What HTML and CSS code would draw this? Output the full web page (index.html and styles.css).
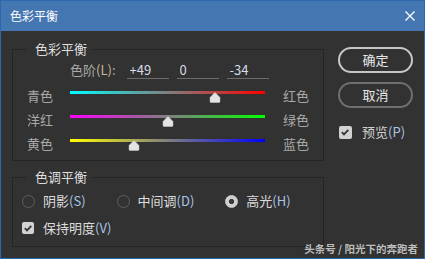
FILE: index.html
```html
<!DOCTYPE html>
<html lang="zh-CN">
<head>
  <meta charset="UTF-8">
  <meta name="viewport" content="width=device-width, initial-scale=1.0">
  <title>色彩平衡</title>
  <link rel="stylesheet" href="styles.css">
</head>
<body>

<div class="dialog">
  <div class="titlebar">
    <span class="title">色彩平衡</span>
    <svg class="close" viewBox="0 0 10 10" aria-hidden="true">
      <path d="M0.5 0.5 L9.5 9.5 M9.5 0.5 L0.5 9.5" />
    </svg>
  </div>

  <div class="content">
    <div class="main">

      <!-- Color balance group -->
      <div class="group group-color">
        <div class="group-title">色彩平衡</div>
        <div class="levels">
          <span class="levels-label">色阶<span class="key">(L)</span>:</span>
          <input class="level" type="text" value="+49">
          <input class="level" type="text" value="0">
          <input class="level" type="text" value="-34">
        </div>

        <div class="slider-row">
          <span class="side">青色</span>
          <div class="track cyan-red">
            <svg class="thumb" style="left: 74.5%;" viewBox="0 0 11 11"><path d="M5.5 0.3 L10.7 5.6 V9.3 Q10.7 10.7 9.3 10.7 H1.7 Q0.3 10.7 0.3 9.3 V5.6 Z" /></svg>
          </div>
          <span class="side">红色</span>
        </div>
        <div class="slider-row">
          <span class="side">洋红</span>
          <div class="track magenta-green">
            <svg class="thumb" style="left: 50%;" viewBox="0 0 11 11"><path d="M5.5 0.3 L10.7 5.6 V9.3 Q10.7 10.7 9.3 10.7 H1.7 Q0.3 10.7 0.3 9.3 V5.6 Z" /></svg>
          </div>
          <span class="side">绿色</span>
        </div>
        <div class="slider-row">
          <span class="side">黄色</span>
          <div class="track yellow-blue">
            <svg class="thumb" style="left: 33%;" viewBox="0 0 11 11"><path d="M5.5 0.3 L10.7 5.6 V9.3 Q10.7 10.7 9.3 10.7 H1.7 Q0.3 10.7 0.3 9.3 V5.6 Z" /></svg>
          </div>
          <span class="side">蓝色</span>
        </div>
      </div>

      <!-- Tone balance group -->
      <div class="group group-tone">
        <div class="group-title">色调平衡</div>
        <div class="radio-row">
          <label class="radio-item"><span class="radio"></span>阴影<span class="key">(S)</span></label>
          <label class="radio-item"><span class="radio"></span>中间调<span class="key">(D)</span></label>
          <label class="radio-item"><span class="radio checked"></span>高光<span class="key">(H)</span></label>
        </div>
        <label class="check keep">
          <span class="box"><svg viewBox="0 0 12 12"><path d="M2.8 6.2 L5 8.4 L9.3 3.8" /></svg></span>保持明度<span class="key">(V)</span>
        </label>
      </div>

    </div>

    <div class="actions">
      <button class="btn btn-primary">确定</button>
      <button class="btn">取消</button>
      <label class="check preview">
        <span class="box"><svg viewBox="0 0 12 12"><path d="M2.8 6.2 L5 8.4 L9.3 3.8" /></svg></span>预览<span class="key">(P)</span>
      </label>
    </div>
  </div>

  <div class="watermark">头条号 / 阳光下的奔跑者</div>
</div>

</body>
</html>
```

FILE: styles.css
```css
/* Global */
* {
  box-sizing: border-box;
}

html, body {
  margin: 0;
  padding: 0;
}

body {
  font-family: "Noto Sans CJK SC", "Noto Sans", sans-serif;
  font-size: 13px;
  background-color: #323232;
}

/* Window */
.dialog {
  position: relative;
  width: 425px;
  height: 259px;
  border: 1px solid #2d68ad;
  background-color: #323232;
  display: flex;
  flex-direction: column;
}

.titlebar {
  flex: none;
  height: 30px;
  padding: 0 9px 0 9px;
  background-color: #4477b1;
  color: #ffffff;
  display: flex;
  align-items: center;
  justify-content: space-between;
}

.title {
  font-size: 12px;
  line-height: 16px;
}

.close {
  width: 10px;
  height: 10px;
}

.close path {
  stroke: #ffffff;
  stroke-width: 1.3;
  fill: none;
}

.content {
  display: flex;
  gap: 14px;
  padding: 16px 10px 0 11px;
}

.main {
  width: 312px;
  padding-top: 2px;
  display: flex;
  flex-direction: column;
  gap: 16px;
}

/* Group boxes */
.group {
  border: 1px solid #242424;
}

.group-title {
  width: fit-content;
  margin: -9px 0 0 13px;
  padding: 0 5px 0 9px;
  line-height: 16px;
  color: #dedede;
  background-color: #323232;
}

.key {
  color: #a9c5e6;
}

/* Levels */
.group-color {
  padding-bottom: 3px;
}

.levels {
  display: flex;
  height: 18px;
  margin: 4px 0 0 57px;
}

.levels-label {
  color: #a9a9a9;
  line-height: 18px;
  margin-right: 11px;
}

.levels-label .key {
  color: #c9b79c;
}

.level {
  width: 42px;
  height: 18px;
  margin: 0 8px 0 0;
  padding: 0 0 0 3px;
  border: none;
  border-bottom: 1px solid #6b6b6b;
  background: transparent;
  color: #d6dde8;
  font-family: inherit;
  font-size: 13px;
  line-height: 17px;
  outline: none;
}

/* Sliders */
.slider-row {
  display: flex;
  align-items: flex-start;
  height: 24px;
  padding-left: 14px;
}

.levels + .slider-row {
  margin-top: 6px;
}

.side {
  width: 26px;
  line-height: 22px;
  color: #a9a9a9;
}

.track {
  position: relative;
  width: 195px;
  height: 3px;
  margin: 6px 18px 0 17px;
}

.cyan-red {
  background: linear-gradient(to right, #00ffff, #ff0000);
}

.magenta-green {
  background: linear-gradient(to right, #ff00ff, #00ff00);
}

.yellow-blue {
  background: linear-gradient(to right, #ffff00, #0000ff);
}

.thumb {
  position: absolute;
  top: 1px;
  width: 11px;
  height: 11px;
  transform: translateX(-50%);
}

.thumb path {
  fill: #e4e4e4;
  stroke: #9a9a9a;
  stroke-width: 0.5;
}

/* Tone balance */
.group-tone {
  padding-bottom: 9px;
}

.radio-row {
  display: flex;
  gap: 31px;
  height: 18px;
  margin-top: 7px;
  padding-left: 9px;
}

.radio-item {
  display: flex;
  align-items: center;
  line-height: 18px;
  color: #dcdcdc;
}

.radio {
  width: 13px;
  height: 13px;
  margin-right: 8px;
  border: 1px solid #5e5e5e;
  border-radius: 50%;
}

.radio.checked {
  border-color: #cfcfcf;
  background: radial-gradient(circle, #3a3a3a 0 2.3px, #cfcfcf 2.9px);
}

.check {
  display: flex;
  align-items: center;
  height: 18px;
  line-height: 18px;
  color: #dcdcdc;
}

.keep {
  margin-top: 9px;
  padding-left: 9px;
}

.box {
  width: 12px;
  height: 12px;
  margin-right: 9px;
  border-radius: 2px;
  background-color: #d2d2d2;
  display: flex;
}

.box svg {
  width: 12px;
  height: 12px;
}

.box path {
  fill: none;
  stroke: #363636;
  stroke-width: 1.8;
}

/* Buttons */
.actions {
  width: 75px;
  display: flex;
  flex-direction: column;
}

.btn {
  height: 26px;
  padding: 0;
  border: 2px solid #6f6f6f;
  border-radius: 13px;
  background: transparent;
  color: #e8e8e8;
  font-family: inherit;
  font-size: 13px;
  line-height: 20px;
  cursor: pointer;
}

.btn + .btn {
  margin-top: 9px;
}

.btn-primary {
  border-color: #c6c6c6;
}

.preview {
  margin: 15px 0 0 1px;
  color: #cfcfcf;
}

.preview .box {
  width: 13px;
  height: 13px;
  margin-right: 10px;
}

/* Watermark over the corner */
.watermark {
  position: absolute;
  right: 6px;
  bottom: 3px;
  font-size: 10.5px;
  font-weight: bold;
  line-height: 12px;
  color: rgba(255, 255, 255, 0.72);
  text-shadow: 0 0 1px rgba(0, 0, 0, 0.5);
}
```
